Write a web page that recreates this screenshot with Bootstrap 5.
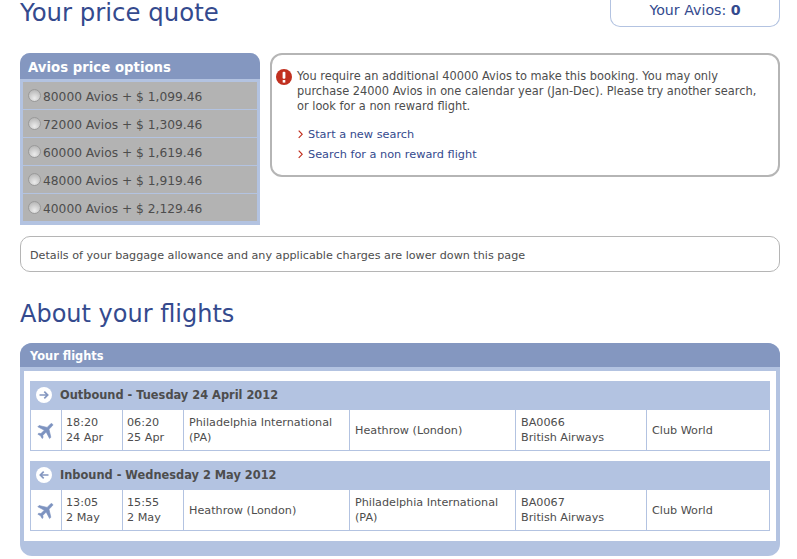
<!DOCTYPE html>
<html lang="en"><head><meta charset="utf-8"><title>Your price quote</title>
<link rel="stylesheet" href="https://cdn.jsdelivr.net/npm/bootstrap@5.3.0/dist/css/bootstrap.min.css">
<style>
html,body{overflow:hidden;height:559px}
body{background:#fff;font-family:"DejaVu Sans",Verdana,sans-serif;font-size:11.2px;line-height:15px;color:#4d4d4d}
.pg{width:760px;margin-left:20px}
.ttl{font-size:24.4px;line-height:26px;color:#344a8e;font-weight:400;margin:0}
.avbox{width:170px;height:27px;border:1px solid #b3c3e1;border-top:0;border-radius:0 0 10px 10px;color:#344a8e;font-size:14.2px;line-height:21px;text-align:center}
.avbox b{font-weight:700}
.toprow{height:53px}
.pricepanel{width:240px;height:172px;background:#b3c3e1;border-radius:10px 10px 0 0}
.pricehd{height:26px;background:#8497c0;color:#fff;font-weight:700;font-size:13.3px;line-height:29px;padding-left:8px;border-radius:10px 10px 0 0}
.pricelist{padding:3px 3px 4px}
.pricerow{height:27px;background:#b3b3b3;margin-bottom:1px;font-size:12.25px;line-height:28px;padding:2px 0 0 6px;color:#4d4d4d;gap:2px}
.pricerow:last-child{margin-bottom:0}
.pricerow .form-check-input{width:13px;height:13px;margin:0 0 2px -1px;float:none;opacity:1;border:1px solid #9a9a9a;background:radial-gradient(circle at 50% 75%,#ececec,#adadad);flex:none}
.msgbox{width:510px;height:124px;margin-left:10px;border:2px solid #b5b5b5;border-radius:12px;padding:14px 0 0 4px;font-size:11.38px}
.msgtext{margin:0 0 0 5px;width:470px}
.lnk{color:#344a8e;text-decoration:none;display:flex;align-items:center;gap:5px;height:20px;margin-left:22px;font-size:11.3px}
.lnks{margin-top:10px}
.bagbox{margin-top:11px;height:36px;border:1px solid #b5b5b5;border-radius:10px;padding-left:9px;line-height:37px;font-size:11.17px}
.ttl2{font-size:24px;line-height:30px;color:#344a8e;font-weight:400;margin:27px 0 14px}
.flpanel{height:213px;background:#b3c3e1;border-radius:12px;overflow:hidden}
.flhd{height:24px;background:#8497c0;color:#fff;font-weight:700;font-size:11.4px;line-height:26px;padding-left:10px}
.flwhite{background:#fff;margin:4px 4px 0;height:170px;padding:10px 6px}
.seghd{height:28px;background:#b3c3e1;color:#4d4d4d;font-weight:700;font-size:11.4px;gap:8px;padding-left:6px}
.segtb{table-layout:fixed;width:739px;border-collapse:collapse;margin-bottom:10px;--bs-table-bg:#fff;--bs-table-color:#4d4d4d}
.segtb:last-child{margin-bottom:0}
.segtb td{height:41px;border:1px solid #b3c3e1;padding:0 5px;vertical-align:middle;font-size:11.2px;line-height:15px;color:#4d4d4d}
.c1{width:31px}.c2,.c3{width:61px}.c4,.c5{width:166px}.c6{width:131px}.c7{width:123px}
.segtb td.pl{padding:0;text-align:center}
.segtb td.tm{padding-left:4px}
.plane{fill:#7d93c0;stroke:#7d93c0;stroke-width:.7}
</style></head><body>
<div class="pg">
  <div class="d-flex justify-content-between align-items-start toprow">
    <h1 class="ttl">Your price quote</h1>
    <div class="avbox">Your Avios: <b>0</b></div>
  </div>
  <div class="d-flex align-items-start">
    <div class="pricepanel">
      <div class="pricehd">Avios price options</div>
      <div class="pricelist">
        <div class="pricerow d-flex align-items-center"><input class="form-check-input" type="radio" name="o" disabled>80000 Avios + $ 1,099.46</div>
        <div class="pricerow d-flex align-items-center"><input class="form-check-input" type="radio" name="o" disabled>72000 Avios + $ 1,309.46</div>
        <div class="pricerow d-flex align-items-center"><input class="form-check-input" type="radio" name="o" disabled>60000 Avios + $ 1,619.46</div>
        <div class="pricerow d-flex align-items-center"><input class="form-check-input" type="radio" name="o" disabled>48000 Avios + $ 1,919.46</div>
        <div class="pricerow d-flex align-items-center"><input class="form-check-input" type="radio" name="o" disabled>40000 Avios + $ 2,129.46</div>
      </div>
    </div>
    <div class="msgbox">
      <div class="d-flex align-items-start">
        <svg width="16" height="16" viewBox="0 0 16 16" class="flex-shrink-0"><circle cx="8" cy="8" r="8" fill="#c1301f"/><rect x="6.6" y="2.8" width="2.8" height="7" rx="1" fill="#fff"/><rect x="6.7" y="11" width="2.6" height="2.6" fill="#fff"/></svg>
        <p class="msgtext">You require an additional 40000 Avios to make this booking. You may only purchase 24000 Avios in one calendar year (Jan-Dec). Please try another search, or look for a non reward flight.</p>
      </div>
      <div class="lnks">
        <a class="lnk" href="#"><svg width="5" height="9" viewBox="0 0 5 9"><path d="M.7.7 4.2 4.3.7 7.9" fill="none" stroke="#c1301f" stroke-width="1.2"/></svg>Start a new search</a>
        <a class="lnk" href="#"><svg width="5" height="9" viewBox="0 0 5 9"><path d="M.7.7 4.2 4.3.7 7.9" fill="none" stroke="#c1301f" stroke-width="1.2"/></svg>Search for a non reward flight</a>
      </div>
    </div>
  </div>
  <div class="bagbox">Details of your baggage allowance and any applicable charges are lower down this page</div>
  <h2 class="ttl2">About your flights</h2>
  <div class="flpanel">
    <div class="flhd">Your flights</div>
    <div class="flwhite">
      <div class="seghd d-flex align-items-center">
        <svg width="16" height="16" viewBox="0 0 16 16"><circle cx="8" cy="8" r="8" fill="#fff"/><path d="M3.5 8h8M8.3 4.6 11.7 8 8.3 11.4" fill="none" stroke="#8497c0" stroke-width="1.7"/></svg>
        <span>Outbound - Tuesday 24 April 2012</span>
      </div>
      <table class="segtb"><colgroup><col class="c1"><col class="c2"><col class="c3"><col class="c4"><col class="c5"><col class="c6"><col class="c7"></colgroup><tr>
        <td class="pl"><svg width="21" height="21" viewBox="0 0 24 24"><path class="plane" transform="rotate(45 12 12)" d="M21 16v-2l-8-5V3.5c0-.83-.67-1.5-1.5-1.5S10 2.67 10 3.5V9l-8 5v2l8-2.5V19l-2 1.5V22l3.5-1 3.5 1v-1.5L13 19v-5.5l8 2.5z"/></svg></td>
        <td class="tm">18:20<br>24 Apr</td><td class="tm">06:20<br>25 Apr</td><td>Philadelphia International (PA)</td><td>Heathrow (London)</td><td>BA0066<br>British Airways</td><td>Club World</td>
      </tr></table>
      <div class="seghd d-flex align-items-center">
        <svg width="16" height="16" viewBox="0 0 16 16"><circle cx="8" cy="8" r="8" fill="#fff"/><path d="M12.5 8h-8M7.7 4.6 4.3 8 7.7 11.4" fill="none" stroke="#8497c0" stroke-width="1.7"/></svg>
        <span>Inbound - Wednesday 2 May 2012</span>
      </div>
      <table class="segtb"><colgroup><col class="c1"><col class="c2"><col class="c3"><col class="c4"><col class="c5"><col class="c6"><col class="c7"></colgroup><tr>
        <td class="pl"><svg width="21" height="21" viewBox="0 0 24 24"><path class="plane" transform="rotate(45 12 12)" d="M21 16v-2l-8-5V3.5c0-.83-.67-1.5-1.5-1.5S10 2.67 10 3.5V9l-8 5v2l8-2.5V19l-2 1.5V22l3.5-1 3.5 1v-1.5L13 19v-5.5l8 2.5z"/></svg></td>
        <td class="tm">13:05<br>2 May</td><td class="tm">15:55<br>2 May</td><td>Heathrow (London)</td><td>Philadelphia International (PA)</td><td>BA0067<br>British Airways</td><td>Club World</td>
      </tr></table>
    </div>
  </div>
</div>
<script src="https://cdn.jsdelivr.net/npm/bootstrap@5.3.0/dist/js/bootstrap.bundle.min.js"></script>
</body></html>
